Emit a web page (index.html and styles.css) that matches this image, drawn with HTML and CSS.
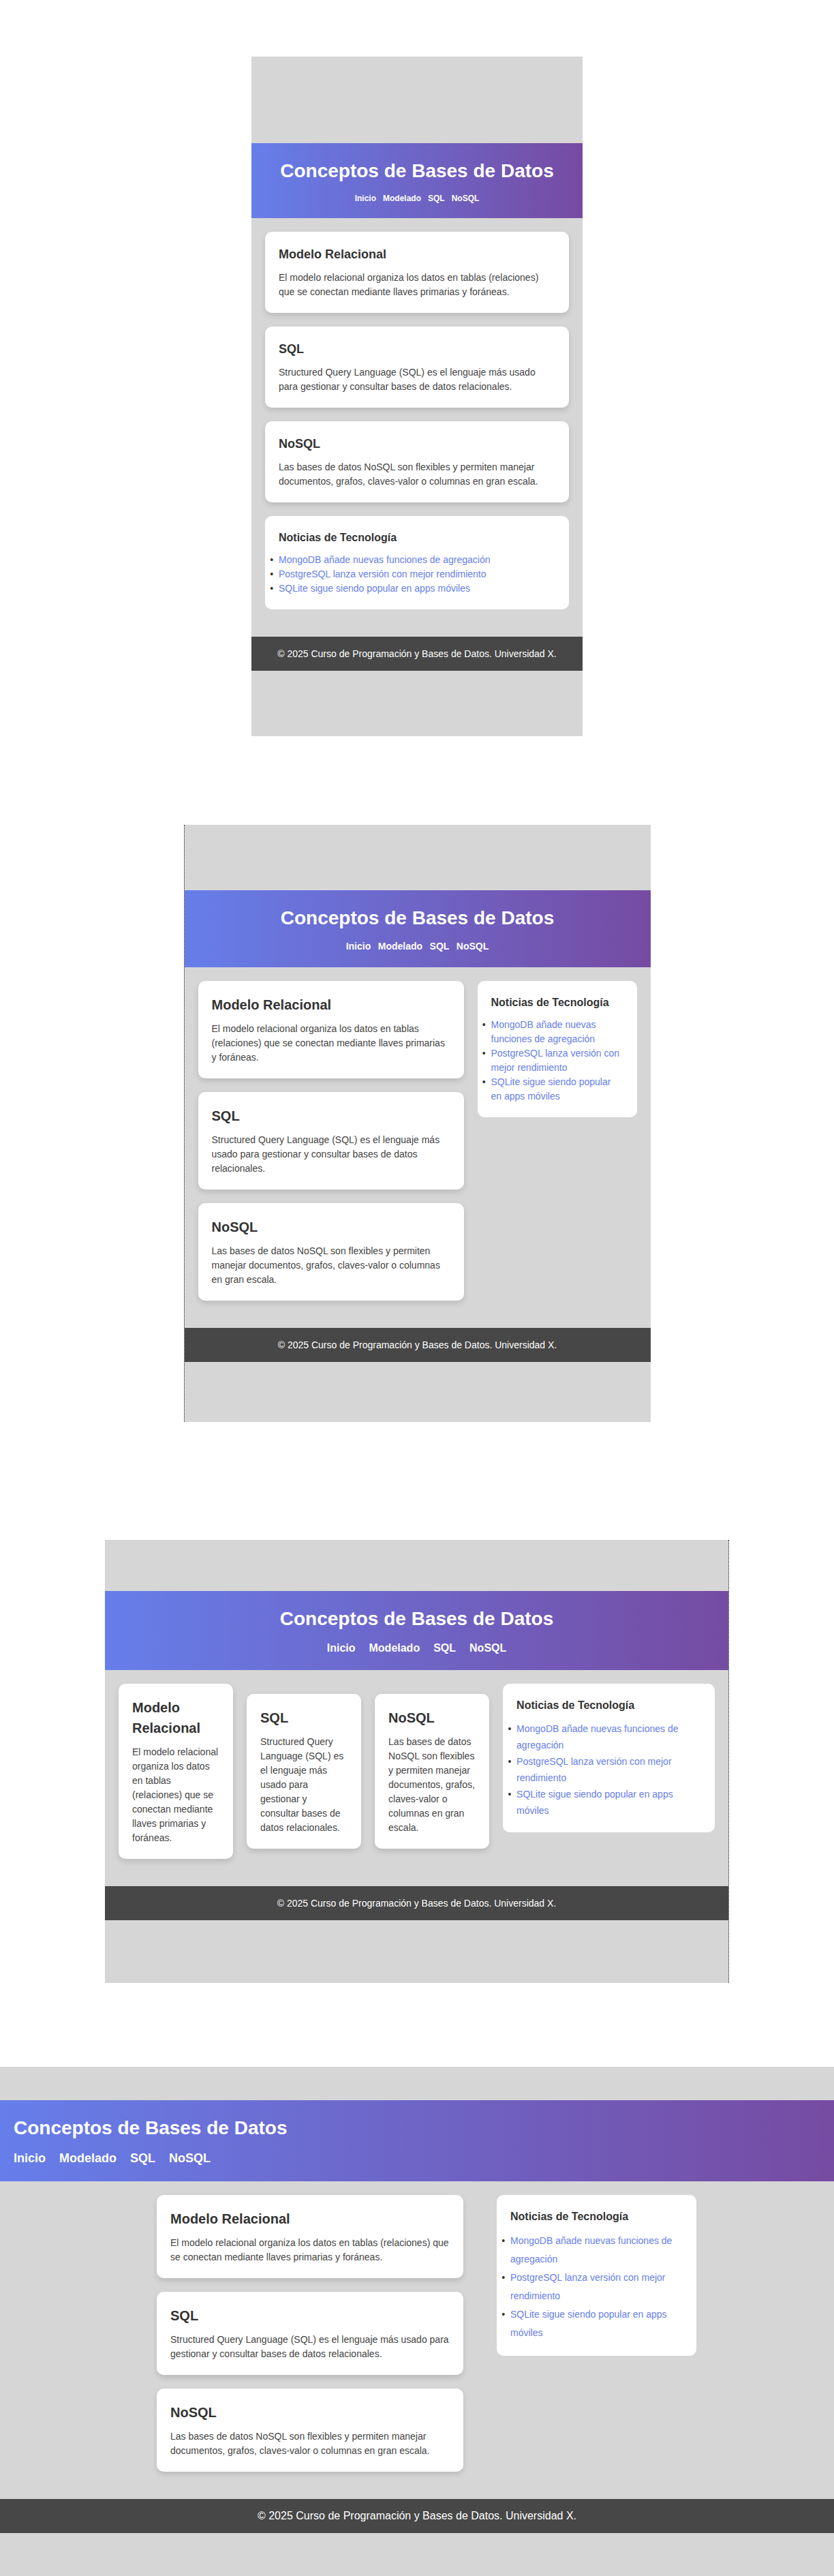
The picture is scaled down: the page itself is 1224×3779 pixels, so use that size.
FILE: index.html
```html
<!DOCTYPE html>
<html lang="es">
<head>
<meta charset="utf-8">
<title>Conceptos de Bases de Datos</title>
<link rel="stylesheet" href="styles.css">
</head>
<body>
<div class="stage">

  <div class="frame frame-1">
    <header class="site-header">
      <h1 class="site-title">Conceptos de Bases de Datos</h1>
      <nav class="site-nav"><a href="#">Inicio</a><a href="#">Modelado</a><a href="#">SQL</a><a href="#">NoSQL</a></nav>
    </header>
    <main class="content">
      <section class="stack">
        <article class="card"><h2>Modelo Relacional</h2><p>El modelo relacional organiza los datos en tablas (relaciones) que se conectan mediante llaves primarias y foráneas.</p></article>
        <article class="card"><h2>SQL</h2><p>Structured Query Language (SQL) es el lenguaje más usado para gestionar y consultar bases de datos relacionales.</p></article>
        <article class="card"><h2>NoSQL</h2><p>Las bases de datos NoSQL son flexibles y permiten manejar documentos, grafos, claves-valor o columnas en gran escala.</p></article>
      </section>
      <aside class="news">
        <h3>Noticias de Tecnología</h3>
        <ul>
          <li><a href="#">MongoDB añade nuevas funciones de agregación</a></li>
          <li><a href="#">PostgreSQL lanza versión con mejor rendimiento</a></li>
          <li><a href="#">SQLite sigue siendo popular en apps móviles</a></li>
        </ul>
      </aside>
    </main>
    <footer class="site-footer">© 2025 Curso de Programación y Bases de Datos. Universidad X.</footer>
  </div>

  <div class="frame frame-2">
    <header class="site-header">
      <h1 class="site-title">Conceptos de Bases de Datos</h1>
      <nav class="site-nav"><a href="#">Inicio</a><a href="#">Modelado</a><a href="#">SQL</a><a href="#">NoSQL</a></nav>
    </header>
    <main class="content">
      <section class="stack">
        <article class="card"><h2>Modelo Relacional</h2><p>El modelo relacional organiza los datos en tablas (relaciones) que se conectan mediante llaves primarias y foráneas.</p></article>
        <article class="card"><h2>SQL</h2><p>Structured Query Language (SQL) es el lenguaje más usado para gestionar y consultar bases de datos relacionales.</p></article>
        <article class="card"><h2>NoSQL</h2><p>Las bases de datos NoSQL son flexibles y permiten manejar documentos, grafos, claves-valor o columnas en gran escala.</p></article>
      </section>
      <aside class="news">
        <h3>Noticias de Tecnología</h3>
        <ul>
          <li><a href="#">MongoDB añade nuevas funciones de agregación</a></li>
          <li><a href="#">PostgreSQL lanza versión con mejor rendimiento</a></li>
          <li><a href="#">SQLite sigue siendo popular en apps móviles</a></li>
        </ul>
      </aside>
    </main>
    <footer class="site-footer">© 2025 Curso de Programación y Bases de Datos. Universidad X.</footer>
  </div>

  <div class="frame frame-3">
    <header class="site-header">
      <h1 class="site-title">Conceptos de Bases de Datos</h1>
      <nav class="site-nav"><a href="#">Inicio</a><a href="#">Modelado</a><a href="#">SQL</a><a href="#">NoSQL</a></nav>
    </header>
    <main class="content">
      <section class="stack">
        <article class="card"><h2>Modelo Relacional</h2><p>El modelo relacional organiza los datos en tablas (relaciones) que se conectan mediante llaves primarias y foráneas.</p></article>
        <article class="card"><h2>SQL</h2><p>Structured Query Language (SQL) es el lenguaje más usado para gestionar y consultar bases de datos relacionales.</p></article>
        <article class="card"><h2>NoSQL</h2><p>Las bases de datos NoSQL son flexibles y permiten manejar documentos, grafos, claves-valor o columnas en gran escala.</p></article>
      </section>
      <aside class="news">
        <h3>Noticias de Tecnología</h3>
        <ul>
          <li><a href="#">MongoDB añade nuevas funciones de agregación</a></li>
          <li><a href="#">PostgreSQL lanza versión con mejor rendimiento</a></li>
          <li><a href="#">SQLite sigue siendo popular en apps móviles</a></li>
        </ul>
      </aside>
    </main>
    <footer class="site-footer">© 2025 Curso de Programación y Bases de Datos. Universidad X.</footer>
  </div>

  <div class="frame frame-4">
    <header class="site-header">
      <h1 class="site-title">Conceptos de Bases de Datos</h1>
      <nav class="site-nav"><a href="#">Inicio</a><a href="#">Modelado</a><a href="#">SQL</a><a href="#">NoSQL</a></nav>
    </header>
    <main class="content">
      <section class="stack">
        <article class="card"><h2>Modelo Relacional</h2><p>El modelo relacional organiza los datos en tablas (relaciones) que se conectan mediante llaves primarias y foráneas.</p></article>
        <article class="card"><h2>SQL</h2><p>Structured Query Language (SQL) es el lenguaje más usado para gestionar y consultar bases de datos relacionales.</p></article>
        <article class="card"><h2>NoSQL</h2><p>Las bases de datos NoSQL son flexibles y permiten manejar documentos, grafos, claves-valor o columnas en gran escala.</p></article>
      </section>
      <aside class="news">
        <h3>Noticias de Tecnología</h3>
        <ul>
          <li><a href="#">MongoDB añade nuevas funciones de agregación</a></li>
          <li><a href="#">PostgreSQL lanza versión con mejor rendimiento</a></li>
          <li><a href="#">SQLite sigue siendo popular en apps móviles</a></li>
        </ul>
      </aside>
    </main>
    <footer class="site-footer">© 2025 Curso de Programación y Bases de Datos. Universidad X.</footer>
  </div>

</div>
</body>
</html>
```

FILE: styles.css
```css
* { box-sizing: border-box; }

html, body {
  margin: 0;
  padding: 0;
}

body {
  background: #ffffff;
  font-family: "Liberation Sans", Arial, Helvetica, sans-serif;
  color: #333333;
  line-height: 1.5;
}

.stage {
  display: flex;
  flex-direction: column;
  align-items: center;
  padding-top: 83px;
}

/* device frames */
.frame {
  background: #d6d6d6;
  display: flex;
  flex-direction: column;
}

.frame-1 {
  width: 486px;
  padding: 127px 0 96px;
}

.frame-2 {
  width: 685px;
  margin-top: 130px;
  padding: 96px 0 88px;
  border-left: 1px dotted #222222;
}

.frame-3 {
  width: 916px;
  margin-top: 173px;
  padding: 75px 0 92px;
  border-right: 1px dotted #222222;
}

.frame-4 {
  width: 100%;
  margin-top: 123px;
  padding: 49px 0 63px;
}

/* header */
.site-header {
  background: linear-gradient(90deg, #667eea 0%, #764ba2 100%);
  color: #ffffff;
  padding: 20px;
  text-align: center;
}

.site-title {
  margin: 0 0 10px;
  font-size: 28px;
  line-height: 42px;
  font-weight: bold;
}

.site-nav {
  display: flex;
  justify-content: center;
  gap: 10px;
  font-weight: bold;
  font-size: 12px;
  line-height: 18px;
}

.site-nav a {
  color: #ffffff;
  text-decoration: none;
}

.frame-2 .site-nav { font-size: 14px; line-height: 21px; gap: 10.5px; }
.frame-3 .site-nav { font-size: 16px; line-height: 24px; gap: 20px; }
.frame-4 .site-header { text-align: left; }
.frame-4 .site-nav { font-size: 18px; line-height: 27px; gap: 20px; justify-content: flex-start; }

/* main content */
.content {
  display: grid;
  grid-template-columns: 1fr;
  gap: 20px;
  align-items: start;
  padding: 20px 20px 40px;
}

.frame-2 .content { grid-template-columns: 5fr 3fr; }
.frame-3 .content { grid-template-columns: 7fr 4fr; }
.frame-4 .content {
  grid-template-columns: 450px 293px;
  column-gap: 49px;
  padding-left: 230px;
}

.stack {
  display: flex;
  flex-direction: column;
  gap: 20px;
}

.frame-3 .stack {
  flex-direction: row;
  align-items: center;
}

.frame-3 .stack .card {
  flex: 1 1 0;
  min-width: 0;
}

.card {
  background: #ffffff;
  border-radius: 10px;
  padding: 20px;
  box-shadow: 0 4px 8px rgba(0, 0, 0, 0.13);
}

.card h2 {
  margin: 0 0 10px;
  font-size: 20px;
  line-height: 1.5;
  color: #333333;
}

.frame-1 .card h2 { font-size: 18px; }

.card p {
  margin: 0;
  font-size: 14px;
  line-height: 21px;
  color: #444444;
}

/* news aside */
.news {
  background: #ffffff;
  border-radius: 10px;
  padding: 20px;
}

.news h3 {
  margin: 0 0 10px;
  font-size: 16px;
  line-height: 24px;
  color: #333333;
}

.news ul {
  margin: 0;
  padding: 0;
}

.news li {
  font-size: 14px;
  line-height: 21px;
  color: #333333;
}

.news li::marker {
  content: "\2022\00a0\00a0";
}

.frame-3 .news li { line-height: 24px; }
.frame-4 .news li { line-height: 27px; }

.news a {
  color: #667eea;
  text-decoration: none;
}

/* footer */
.site-footer {
  background: #474747;
  color: #ffffff;
  height: 50px;
  display: flex;
  align-items: center;
  justify-content: center;
  font-size: 14px;
}

.frame-4 .site-footer { font-size: 16px; }
```
